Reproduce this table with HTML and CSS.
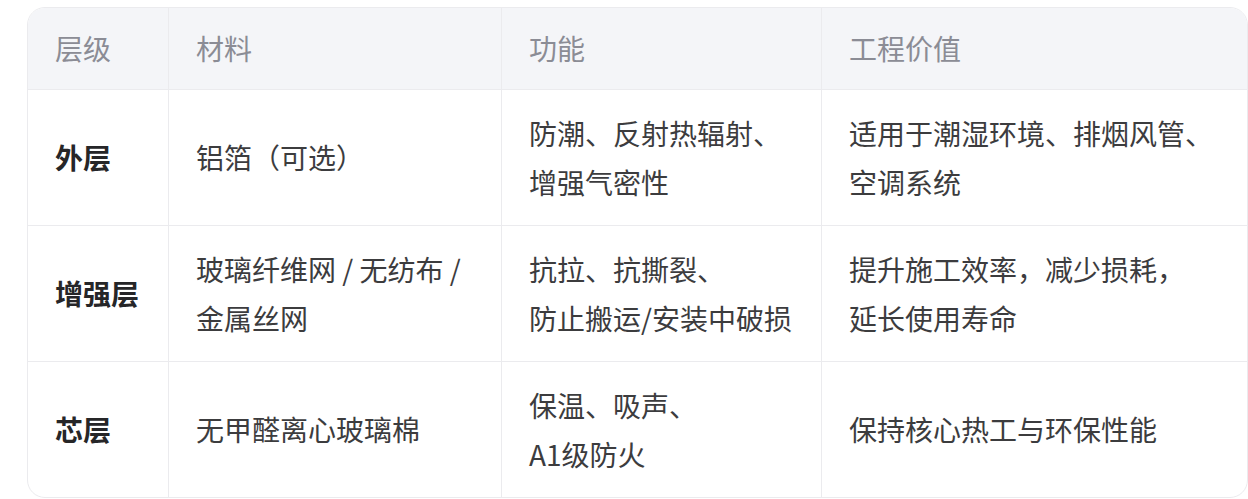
FILE: index.html
```html
<!DOCTYPE html>
<html lang="zh-CN">
<head>
<meta charset="utf-8">
<title>结构层级</title>
<link rel="stylesheet" href="styles.css">
</head>
<body>
<div class="page">
  <div class="table">
    <div class="cell head">层级</div>
    <div class="cell head">材料</div>
    <div class="cell head">功能</div>
    <div class="cell head last-col">工程价值</div>

    <div class="cell layer">外层</div>
    <div class="cell">铝箔（可选）</div>
    <div class="cell">防潮、反射热辐射、<br>增强气密性</div>
    <div class="cell last-col">适用于潮湿环境、排烟风管、<br>空调系统</div>

    <div class="cell layer">增强层</div>
    <div class="cell">玻璃纤维网 / 无纺布 /<br>金属丝网</div>
    <div class="cell">抗拉、抗撕裂、<br>防止搬运/安装中破损</div>
    <div class="cell last-col">提升施工效率，减少损耗，<br>延长使用寿命</div>

    <div class="cell layer last-row">芯层</div>
    <div class="cell last-row">无甲醛离心玻璃棉</div>
    <div class="cell last-row">保温、吸声、<br>A1级防火</div>
    <div class="cell last-row last-col">保持核心热工与环保性能</div>
  </div>
</div>
</body>
</html>
```

FILE: styles.css
```css
html, body {
  margin: 0;
  padding: 0;
  background: #ffffff;
}

.page {
  padding: 7px 0 0 27px;
  font-family: "Noto Sans CJK SC", "Noto Sans", sans-serif;
}

.table {
  width: 1221px;
  box-sizing: border-box;
  border: 1px solid #ebebee;
  border-radius: 18px;
  overflow: hidden;
  display: grid;
  grid-template-columns: 141px 333px 320px 1fr;
}

.cell {
  box-sizing: border-box;
  padding: 18.5px 27px;
  border-right: 1px solid #ebebee;
  border-bottom: 1px solid #ebebee;
  font-size: 28px;
  line-height: 49px;
  color: #3c3c3e;
  display: flex;
  flex-direction: column;
  justify-content: center;
  white-space: nowrap;
}

.head {
  background: #f4f5f8;
  color: #8b8c95;
  padding-top: 16px;
  padding-bottom: 16px;
}

.layer {
  font-weight: 700;
  color: #262628;
}

.last-col {
  border-right: none;
}

.last-row {
  border-bottom: none;
}
```
